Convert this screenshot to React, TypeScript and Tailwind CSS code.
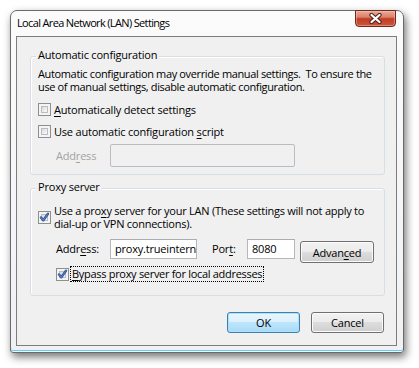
import React from "react";

function Checkbox({ checked }: { checked?: boolean }) {
  return (
    <span className="relative flex h-[13px] w-[13px] shrink-0 items-center justify-center border border-[#8e8f8f] bg-[#f4f4f4]">
      <span className="absolute inset-[2px] border border-[#b9bdc2] bg-[linear-gradient(135deg,#d6d9dd_0%,#eaebec_50%,#fafafa_100%)]" />
      {checked && (
        <svg className="relative" width="11" height="11" viewBox="0 0 11 11">
          <path d="M2 5.5 L4.3 8.3 L9 1.8" fill="none" stroke="#2b4c8c" strokeWidth="2.4" strokeLinejoin="round" strokeLinecap="round" />
          <path d="M2 5.5 L4.3 8.3 L9 1.8" fill="none" stroke="#5b82c6" strokeWidth="1.1" strokeLinejoin="round" strokeLinecap="round" />
        </svg>
      )}
    </span>
  );
}

function U({ children }: { children: React.ReactNode }) {
  return <span className="underline underline-offset-[2px]">{children}</span>;
}

function Button({ children, def, className }: { children: React.ReactNode; def?: boolean; className: string }) {
  const look = def
    ? "border-[#3c7fb1] bg-[linear-gradient(180deg,#eaf6fd_0%,#d9f0fc_50%,#bee6fd_50%,#a7d9f5_100%)] shadow-[inset_0_0_0_1px_#aee0f8]"
    : "border-[#707070] bg-[linear-gradient(180deg,#f2f2f2_0%,#ebebeb_50%,#dddddd_50%,#cfcfcf_100%)] shadow-[inset_0_0_0_1px_#fbfbfb]";
  return (
    <div className={`flex items-center justify-center rounded-[3px] border ${look} ${className}`}>
      <span className="leading-[15px]">{children}</span>
    </div>
  );
}

export default function App() {
  return (
    <div className="h-[368px] w-[419px] bg-white pl-[10px] pt-[10px] font-['Open_Sans','Noto_Sans',sans-serif] text-[11px] tracking-[-0.2px] text-black">
      <div className="flex h-[343px] w-[394px] flex-col rounded-t-[7px] rounded-b-[3px] border border-[#6a6a6a] bg-[linear-gradient(180deg,#fbfbfc_0%,#f0f1f3_100%)] shadow-[inset_0_-1px_0_#e8f6fb,inset_0_-2px_0_#6ccbeb,2px_4px_9px_rgba(0,0,0,0.55)]">
        {/* Title bar */}
        <div className="flex h-[25px] items-start justify-between">
          <div className="whitespace-nowrap pl-[6px] pt-[4px] text-[11px] leading-[15px] tracking-[-0.65px] text-black">Local Area Network (LAN) Settings</div>
          <div className="-mt-px mr-[7px] flex h-[17px] w-[41px] items-center justify-center rounded-b-[4px] border border-[#6e2a1c] bg-[linear-gradient(180deg,#eaa898_0%,#dd826c_40%,#c13d25_52%,#cd563d_100%)] shadow-[inset_0_0_0_1px_rgba(255,210,200,0.4)]">
            <svg width="13" height="11" viewBox="0 0 13 11">
              <path d="M2.5 2 L10.5 9 M10.5 2 L2.5 9" stroke="#4a1f16" strokeWidth="4.2" strokeLinecap="round" />
              <path d="M2.5 2 L10.5 9 M10.5 2 L2.5 9" stroke="#ffffff" strokeWidth="2.3" strokeLinecap="round" />
            </svg>
          </div>
        </div>

        {/* Client area */}
        <div className="ml-[5px] flex h-[310px] w-[381px] flex-col border border-[#7d7d7d] bg-[#f0f0f0]">
          {/* Automatic configuration */}
          <div className="relative ml-[13px] mt-[19px] w-[355px] rounded-[3px] border border-[#d5dfe5] pb-[7px] pl-[7px] pt-[10px] shadow-[inset_1px_1px_0_#ffffff]">
            <span className="absolute -top-[10px] left-[5px] bg-[#f0f0f0] px-[2px] leading-[15px]">Automatic configuration</span>
            <p className="whitespace-nowrap leading-[13px] tracking-[-0.36px]">
              Automatic configuration may override manual settings.{"\u00a0"} To ensure the
              <br />
              use of manual settings, disable automatic configuration.
            </p>
            <div className="mt-[9px] flex h-[15px] items-center gap-[3px]">
              <Checkbox />
              <span className="whitespace-nowrap leading-[15px]"><U>A</U>utomatically detect settings</span>
            </div>
            <div className="mt-[7px] flex h-[15px] items-center gap-[3px]">
              <Checkbox />
              <span className="whitespace-nowrap leading-[15px]">Use automatic configuration <U>s</U>cript</span>
            </div>
            <div className="mt-[5px] flex h-[23px] items-center">
              <span className="ml-[18px] w-[54px] leading-[15px] text-[#a3a3a3]">Add<U>r</U>ess</span>
              <div className="h-[23px] w-[185px] rounded-[2px] border border-[#b9bdc3] bg-[#f0f0f0]" />
            </div>
          </div>

          {/* Proxy server */}
          <div className="relative ml-[13px] mt-[13px] w-[355px] rounded-[3px] border border-[#d5dfe5] pb-[13px] pl-[7px] pt-[15px] shadow-[inset_1px_1px_0_#ffffff]">
            <span className="absolute -top-[10px] left-[5px] bg-[#f0f0f0] px-[2px] leading-[15px]">Proxy server</span>
            <div className="flex items-center gap-[3px]">
              <Checkbox checked />
              <span className="whitespace-nowrap leading-[13px] tracking-[-0.25px]">
                Use a pro<U>x</U>y server for your LAN (These settings will not apply to
                <br />
                dial-up or VPN connections).
              </span>
            </div>
            <div className="mt-[9px] flex h-[23px] items-start">
              <span className="ml-[18px] w-[54px] leading-[20px]">Addr<U>e</U>ss:</span>
              <div className="h-[20px] w-[87px] overflow-hidden whitespace-nowrap border border-[#b4b8be] border-t-[#abadb3] bg-white pl-[4px] leading-[18px]">
                proxy.trueinternet.co.th
              </div>
              <span className="ml-[15px] w-[35px] leading-[20px]">Por<U>t</U>:</span>
              <div className="h-[20px] w-[48px] overflow-hidden whitespace-nowrap border border-[#b4b8be] border-t-[#abadb3] bg-white pl-[4px] leading-[18px]">
                8080
              </div>
              <Button className="ml-[5px] mt-[2px] h-[22px] w-[74px]">
                Advan<U>c</U>ed
              </Button>
            </div>
            <div className="ml-[18px] mt-[4px] flex h-[16px] items-center gap-[1px]">
              <Checkbox checked />
              <span className="h-[16px] whitespace-nowrap border border-dotted border-black px-[1px] leading-[14px] tracking-[-0.3px]">
                <U>B</U>ypass proxy server for local addresses
              </span>
            </div>
          </div>

          {/* Buttons */}
          <div className="mt-[16px] flex justify-end gap-[11px] pr-[12px]">
            <Button def className="h-[21px] w-[73px]">OK</Button>
            <Button className="h-[21px] w-[73px]">Cancel</Button>
          </div>
        </div>
      </div>
    </div>
  );
}
